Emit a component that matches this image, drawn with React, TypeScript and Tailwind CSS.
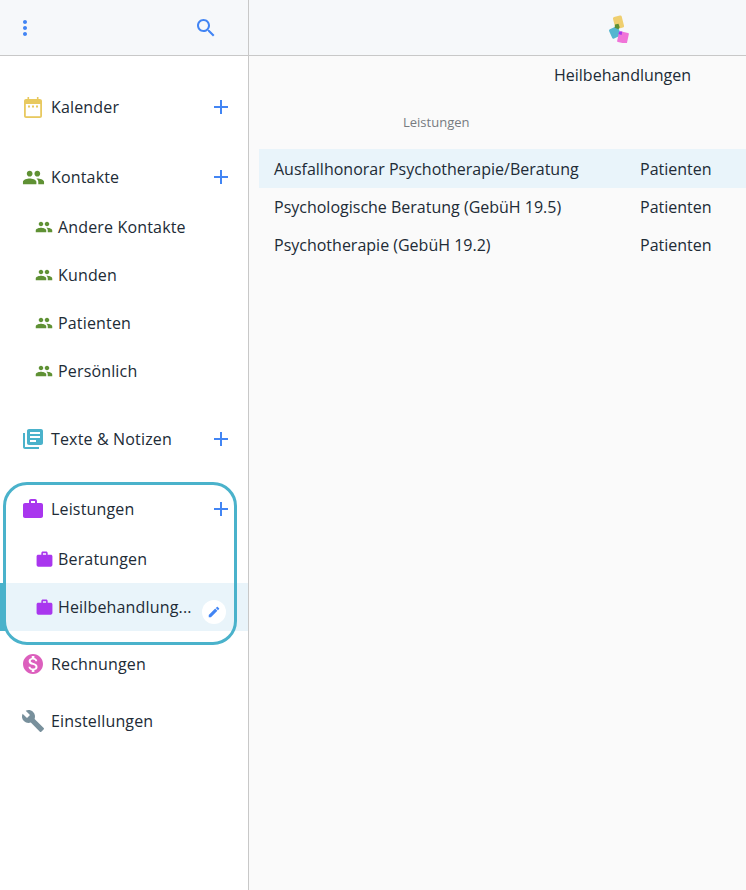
const P = {
  people: "M16 11c1.66 0 2.99-1.34 2.99-3S17.66 5 16 5c-1.66 0-3 1.34-3 3s1.34 3 3 3zm-8 0c1.66 0 2.99-1.34 2.99-3S9.66 5 8 5C6.34 5 5 6.34 5 8s1.34 3 3 3zm0 2c-2.33 0-7 1.17-7 3.5V19h14v-2.5c0-2.33-4.67-3.5-7-3.5zm8 0c-.29 0-.62.02-.97.05 1.16.84 1.97 1.97 1.97 3.45V19h6v-2.5c0-2.33-4.67-3.5-7-3.5z",
  library: "M4 6H2v14c0 1.1.9 2 2 2h14v-2H4V6zm16-4H8c-1.1 0-2 .9-2 2v12c0 1.1.9 2 2 2h12c1.1 0 2-.9 2-2V4c0-1.1-.9-2-2-2zm-1 9H9V9h10v2zm-4 4H9v-2h6v2zm4-8H9V5h10v2z",
  work: "M20 6h-4V4c0-1.11-.89-2-2-2h-4c-1.11 0-2 .89-2 2v2H4c-1.11 0-1.99.89-1.99 2L2 19c0 1.11.89 2 2 2h16c1.11 0 2-.89 2-2V8c0-1.11-.89-2-2-2zm-6 0h-4V4h4v2z",
  money: "M12 2C6.48 2 2 6.48 2 12s4.48 10 10 10 10-4.48 10-10S17.52 2 12 2zm1.41 16.09V20h-2.67v-1.93c-1.71-.36-3.16-1.46-3.27-3.4h1.96c.1 1.05.82 1.87 2.65 1.87 1.96 0 2.4-.98 2.4-1.59 0-.83-.44-1.61-2.67-2.14-2.48-.6-4.18-1.62-4.18-3.67 0-1.72 1.39-2.84 3.11-3.21V4h2.67v1.95c1.86.45 2.79 1.86 2.85 3.39H14.3c-.05-1.11-.64-1.87-2.22-1.87-1.5 0-2.4.68-2.4 1.64 0 .84.65 1.39 2.67 1.91s4.18 1.39 4.18 3.91c-.01 1.83-1.38 2.83-3.12 3.16z",
  wrench: "M22.7 19l-9.1-9.1c.9-2.3.4-5-1.5-6.9-2-2-5-2.4-7.4-1.3L9 6 6 9 1.6 4.7C.4 7.1.9 10.1 2.9 12.1c1.9 1.9 4.6 2.4 6.9 1.5l9.1 9.1c.4.4 1 .4 1.4 0l2.3-2.3c.5-.4.5-1.1.1-1.4z",
  pencil: "M3 17.25V21h3.75L17.81 9.94l-3.75-3.75L3 17.25zM20.71 7.04c.39-.39.39-1.02 0-1.41l-2.34-2.34c-.39-.39-1.02-.39-1.41 0l-1.83 1.83 3.75 3.75 1.83-1.83z",
  search: "M15.5 14h-.79l-.28-.27C15.41 12.59 16 11.11 16 9.5 16 5.91 13.09 3 9.5 3S3 5.91 3 9.5 5.91 16 9.5 16c1.61 0 3.09-.59 4.23-1.57l.27.28v.79l5 4.99L20.49 19l-4.99-5zm-6 0C7.01 14 5 11.99 5 9.5S7.01 5 9.5 5 14 7.01 14 9.5 11.99 14 9.5 14z",
  dots: "M12 8c1.1 0 2-.9 2-2s-.9-2-2-2-2 .9-2 2 .9 2 2 2zm0 2c-1.1 0-2 .9-2 2s.9 2 2 2 2-.9 2-2-.9-2-2-2zm0 6c-1.1 0-2 .9-2 2s.9 2 2 2 2-.9 2-2-.9-2-2-2z",
};

function Icon({ d, className }: { d: string; className: string }) {
  return (
    <svg viewBox="0 0 24 24" className={className} fill="currentColor" aria-hidden="true">
      <path d={d} />
    </svg>
  );
}

function CalendarIcon() {
  return (
    <svg viewBox="0 0 24 24" className="h-[24px] w-[24px]" aria-hidden="true">
      <path
        fill="#e8c95f"
        d="M6.5 2h1.6v2h7.8V2h1.6v2h1.2C20.1 4 21 4.9 21 6v15c0 1.1-.9 2-2 2H5c-1.100 0-2-.9-2-2V6c0-1.100.9-2 2-2h1.500z"
      />
      <rect x="4.800" y="9" width="14.400" height="12.200" fill="#ffffff" />
      <rect x="7" y="10.500" width="2" height="2" fill="#e8c95f" />
      <rect x="11" y="10.500" width="2" height="2" fill="#e8c95f" />
      <rect x="15" y="10.500" width="2" height="2" fill="#e8c95f" />
    </svg>
  );
}

function Plus() {
  return (
    <svg viewBox="0 0 16 16" className="absolute right-[19px] h-[16px] w-[16px] text-[#4285f4]" aria-hidden="true">
      <path d="M7 1h2v6h6v2H9v6H7V9H1V7h6z" fill="currentColor" />
    </svg>
  );
}

function Top({ icon, label, plus, mt }: { icon: React.ReactNode; label: string; plus?: boolean; mt: string }) {
  return (
    <div className={`relative flex h-12 items-center ${mt}`}>
      <div className="ml-[21px] mr-[6px] flex w-[24px] shrink-0 justify-center">{icon}</div>
      <span className="text-[16px] tracking-[0.16px] text-[#212b36]">{label}</span>
      {plus && <Plus />}
    </div>
  );
}

function Sub({ d, color, label, size, selected, mt = "" }: { d: string; color: string; label: string; size: string; selected?: boolean; mt?: string }) {
  return (
    <div className={`relative flex h-12 items-center ${mt} ${selected ? "bg-[#e9f4fa]" : ""}`}>
      {selected && <div className="absolute inset-y-0 left-0 w-[6px] bg-[#4ab2cb]" />}
      <div className="flex w-[58px] shrink-0 justify-end pr-[5px]">
        <Icon d={d} className={`${size} ${color}`} />
      </div>
      <span className="text-[16px] tracking-[0.16px] text-[#212b36]">{label}</span>
      {selected && (
        <div className="absolute left-[202px] top-[17px] flex h-6 w-6 items-center justify-center rounded-full bg-white">
          <Icon d={P.pencil} className="h-[14px] w-[14px] text-[#4285f4]" />
        </div>
      )}
    </div>
  );
}

function Row({ name, active }: { name: string; active?: boolean }) {
  return (
    <div className={`flex items-center pl-[15px] text-[16px] text-[#212b36] ${active ? "h-[39px] bg-[#e9f4fa]" : "h-[38px]"}`}>
      <span className="w-[366px] shrink-0">{name}</span>
      <span>Patienten</span>
    </div>
  );
}

export default function App() {
  return (
    <div className="flex h-[890px] w-[746px] overflow-hidden bg-white font-['Open_Sans',sans-serif]">
      <aside className="relative h-full w-[249px] shrink-0 border-r border-[#c8c8c8] bg-white">
        <header className="flex h-[56px] items-center justify-between border-b border-[#c8c8c8] bg-[#f6f8fa] pl-[13px] pr-[30px]">
          <Icon d={P.dots} className="h-6 w-6 text-[#4285f4]" />
          <Icon d={P.search} className="h-6 w-6 text-[#4285f4]" />
        </header>
        <nav className="pt-[27px]">
          <Top icon={<CalendarIcon />} label="Kalender" plus mt="" />
          <Top icon={<Icon d={P.people} className="h-[23px] w-[23px] text-[#5f9134]" />} label="Kontakte" plus mt="mt-[22px]" />
          <Sub d={P.people} color="text-[#5f9134]" label="Andere Kontakte" size="h-[18px] w-[18px]" mt="mt-[2px]" />
          <Sub d={P.people} color="text-[#5f9134]" label="Kunden" size="h-[18px] w-[18px]" />
          <Sub d={P.people} color="text-[#5f9134]" label="Patienten" size="h-[18px] w-[18px]" />
          <Sub d={P.people} color="text-[#5f9134]" label="Persönlich" size="h-[18px] w-[18px]" />
          <Top icon={<Icon d={P.library} className="h-[24px] w-[24px] text-[#4ab2cb]" />} label="Texte & Notizen" plus mt="mt-[20px]" />
          <Top icon={<Icon d={P.work} className="h-[24px] w-[24px] text-[#a936ee]" />} label="Leistungen" plus mt="mt-[22px]" />
          <Sub d={P.work} color="text-[#a936ee]" label="Beratungen" size="-mr-[1px] h-[19px] w-[19px]" mt="mt-[2px]" />
          <Sub d={P.work} color="text-[#a936ee]" label="Heilbehandlung..." size="-mr-[1px] h-[19px] w-[19px]" selected />
          <Top icon={<Icon d={P.money} className="h-[24px] w-[24px] text-[#dc5fbd]" />} label="Rechnungen" mt="mt-[9px]" />
          <Top icon={<Icon d={P.wrench} className="h-[24px] w-[24px] text-[#78909c]" />} label="Einstellungen" mt="mt-[9px]" />
        </nav>
        <div className="pointer-events-none absolute left-[3px] top-[482px] h-[163px] w-[234px] rounded-[24px] border-[3px] border-[#4ab2cb]" />
      </aside>
      <main className="flex-1 bg-[#fafafa]">
        <header className="flex h-[56px] items-center border-b border-[#c8c8c8] bg-[#f6f8fa] pl-[358px]">
          <svg viewBox="0 0 24 30" className="h-[30px] w-[24px]" aria-hidden="true">
            <rect x="7" y="3" width="9" height="12.500" rx="1.500" fill="#efcf6f" transform="rotate(-14 11.500 9.250)" />
            <rect x="3.200" y="14.500" width="9.600" height="10" rx="1.500" fill="#55b6d0" transform="rotate(-25 8 19.500)" />
            <rect x="11" y="19" width="10" height="11" rx="1" fill="#f074d8" transform="rotate(12 16 24.500)" />
            <path d="M8 11.500l3.500-.8 1.200 3.500-1.200 2-3.800-1.400z" fill="#5f9134" />
            <path d="M12.500 18.500h2.800l-.7 3.400-3.200-1z" fill="#a936ee" />
          </svg>
        </header>
        <h1 className="ml-[305px] mt-[8px] h-[22px] text-[16px] font-normal leading-[22px] text-[#212b36]">Heilbehandlungen</h1>
        <p className="ml-[154px] mt-[27px] h-[18px] text-[13px] leading-[18px] text-[#777b80]">Leistungen</p>
        <div className="ml-[10px] mt-[18px]">
          <Row name="Ausfallhonorar Psychotherapie/Beratung" active />
          <Row name="Psychologische Beratung (GebüH 19.5)" />
          <Row name="Psychotherapie (GebüH 19.2)" />
        </div>
      </main>
    </div>
  );
}
